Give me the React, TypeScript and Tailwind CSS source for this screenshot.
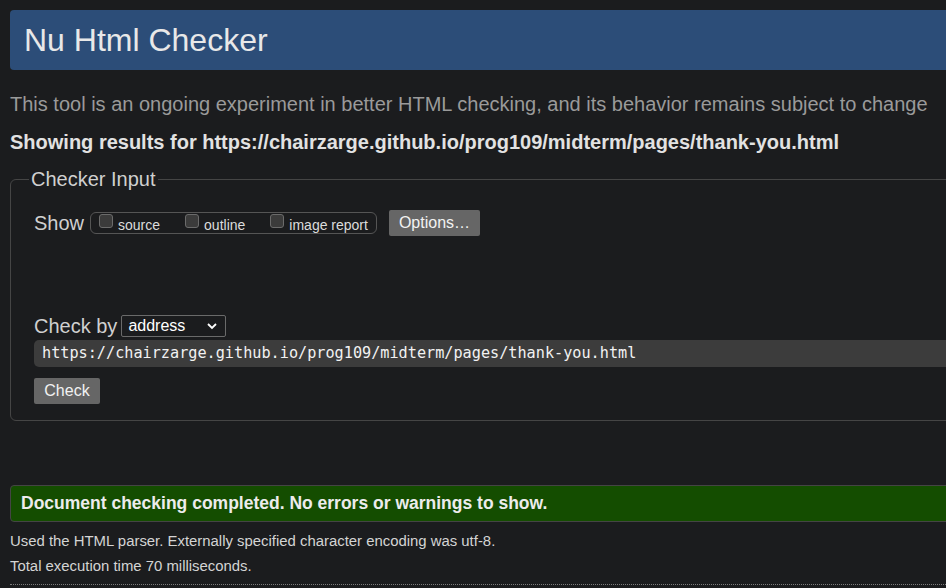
import React from "react";

const CheckItem: React.FC<{ label: string }> = ({ label }) => (
  <label className="flex items-center">
    <span className="mb-[5px] w-[14px] h-[14px] rounded-[3px] border border-[#6b6b6b] bg-[#3b3b3b]" />
    <span className="ml-[5px] mt-[3px] text-[14px] leading-[16px] text-[#dcdcdc]">{label}</span>
  </label>
);

const App: React.FC = () => {
  return (
    <div className="w-[946px] h-[588px] overflow-hidden bg-[#1b1c1e] font-['Liberation_Sans',Arial,sans-serif]">
      <div className="w-[1000px] pl-[10px] pt-[10px]">
        <div className="h-[60px] flex items-center px-[14px] rounded-[4px] bg-[#2c4d78] text-[32px] text-[#e8e8e8]">
          Nu Html Checker
        </div>

        <p className="mt-[22px] text-[20px] leading-[24px] text-[#9a9a9a] whitespace-nowrap">
          This tool is an ongoing experiment in better HTML checking, and its behavior remains subject to change
        </p>
        <p className="mt-[14px] text-[20px] leading-[24px] font-bold text-[#e2e2e2] whitespace-nowrap">
          Showing results for https://chairzarge.github.io/prog109/midterm/pages/thank-you.html
        </p>

        <fieldset className="mt-[13px] border border-[#454545] rounded-[6px] pl-[23px] pb-[16px]">
          <legend className="ml-[-5px] px-[2px] text-[20px] leading-[24px] text-[#d0d0d0]">Checker Input</legend>

          <div className="mt-[19px] h-[26px] flex items-center">
            <span className="text-[20px] leading-[26px] text-[#d0d0d0]">Show</span>
            <div className="ml-[6px] h-[22px] flex items-center gap-[25px] px-[8px] rounded-[6px] border border-[#555]">
              <CheckItem label="source" />
              <CheckItem label="outline" />
              <CheckItem label="image report" />
            </div>
            <button className="ml-[12px] h-[26px] px-[10px] rounded-[2px] bg-[#666] text-[16px] text-[#f2f2f2]">
              Options…
            </button>
          </div>

          <div className="mt-[78px] h-[24px] flex items-center">
            <span className="text-[20px] leading-[24px] text-[#d0d0d0]">Check by</span>
            <div className="ml-[4px] w-[105px] h-[22px] flex items-center justify-between pl-[6px] pr-[8px] rounded-[2px] border border-[#6a6a6a] bg-[#1b1c1e] text-[16px] text-white">
              <span>address</span>
              <svg width="10" height="7" viewBox="0 0 10 7">
                <polyline points="1,1 5,5 9,1" fill="none" stroke="#ffffff" strokeWidth="1.8" />
              </svg>
            </div>
          </div>

          <div className="mt-[2px] h-[27px] flex items-center pl-[8px] rounded-[5px] bg-[#3c3c3c] font-['DejaVu_Sans_Mono',monospace] text-[15.2px] text-[#f2f2f2] whitespace-nowrap">
            https://chairzarge.github.io/prog109/midterm/pages/thank-you.html
          </div>

          <button className="mt-[11px] h-[26px] w-[66px] rounded-[2px] bg-[#666] text-[16px] text-[#f2f2f2]">
            Check
          </button>
        </fieldset>

        <div className="mt-[64px] h-[37px] flex items-center pl-[10px] rounded-[4px] border border-[#444] bg-[#144d00] text-[17.5px] font-bold text-[#ececec] whitespace-nowrap">
          Document checking completed. No errors or warnings to show.
        </div>

        <p className="mt-[7px] text-[14.9px] leading-[25px] text-[#d4d4d4] whitespace-nowrap">
          Used the HTML parser. Externally specified character encoding was utf-8.
        </p>
        <p className="text-[14.9px] leading-[25px] text-[#d4d4d4] whitespace-nowrap">
          Total execution time 70 milliseconds.
        </p>
        <div className="mt-[5px] border-t border-dotted border-[#7a7a7a]" />
      </div>
    </div>
  );
};

export default App;
